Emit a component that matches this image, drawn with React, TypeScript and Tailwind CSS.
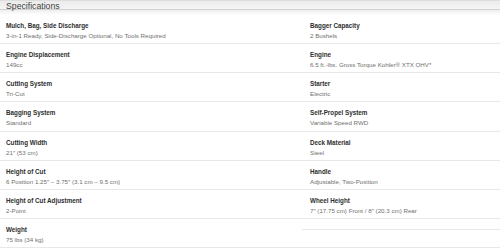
import React from "react";

type Spec = { label: string; value: string };

const leftSpecs: Spec[] = [
  { label: "Mulch, Bag, Side Discharge", value: "3-in-1 Ready, Side-Discharge Optional, No Tools Required" },
  { label: "Engine Displacement", value: "149cc" },
  { label: "Cutting System", value: "Tri-Cut" },
  { label: "Bagging System", value: "Standard" },
  { label: "Cutting Width", value: "21\u2033 (53 cm)" },
  { label: "Height of Cut", value: "6 Position 1.25\u2033 \u2013 3.75\u2033 (3.1 cm \u2013 9.5 cm)" },
  { label: "Height of Cut Adjustment", value: "2-Point" },
  { label: "Weight", value: "75 lbs (34 kg)" },
];

const rightSpecs: Spec[] = [
  { label: "Bagger Capacity", value: "2 Bushels" },
  { label: "Engine", value: "6.5 ft.-lbs. Gross Torque Kohler\u00ae XTX OHV*" },
  { label: "Starter", value: "Electric" },
  { label: "Self-Propel System", value: "Variable Speed RWD" },
  { label: "Deck Material", value: "Steel" },
  { label: "Handle", value: "Adjustable, Two-Position" },
  { label: "Wheel Height", value: "7\u2033 (17.75 cm) Front / 8\u2033 (20.3 cm) Rear" },
];

function SpecRow({ spec, pad }: { spec: Spec; pad: string }) {
  return (
    <div className={`h-[29.14px] border-b border-[#e8e8e8] pt-[6px] ${pad}`}>
      <div className="text-[6.3px] leading-[10px] font-bold text-[#2e2e2e]">{spec.label}</div>
      <div className="text-[6.2px] leading-[10px] text-[#707070]">{spec.value}</div>
    </div>
  );
}

export default function App() {
  return (
    <div
      className="w-[500px] h-[251px] bg-white overflow-hidden"
      style={{ fontFamily: '"Liberation Sans", Arial, sans-serif' }}
    >
      {/* section header */}
      <div className="relative h-[15px]">
        <div className="h-[10px] bg-gradient-to-b from-[#ebebeb] to-[#f5f5f5] border-t border-[#dedede] border-b border-b-[#d2d2d2]" />
        <div className="h-[5px] bg-gradient-to-b from-[#eeeeee] to-white" />
        <div className="absolute left-[6px] top-[0px] text-[8.7px] leading-[13px] text-[#404040]">
          Specifications
        </div>
      </div>

      <div className="flex">
        <div className="w-[302px] flex flex-col">
          {leftSpecs.map((s) => (
            <SpecRow key={s.label} spec={s} pad="pl-[6px]" />
          ))}
        </div>
        <div className="flex-1 flex flex-col">
          {rightSpecs.map((s) => (
            <SpecRow key={s.label} spec={s} pad="pl-[8px]" />
          ))}
          <div className="h-[11px] border-b border-[#e8e8e8]" />
          <div className="h-[18px] border-b border-[#e8e8e8]" />
        </div>
      </div>
    </div>
  );
}
